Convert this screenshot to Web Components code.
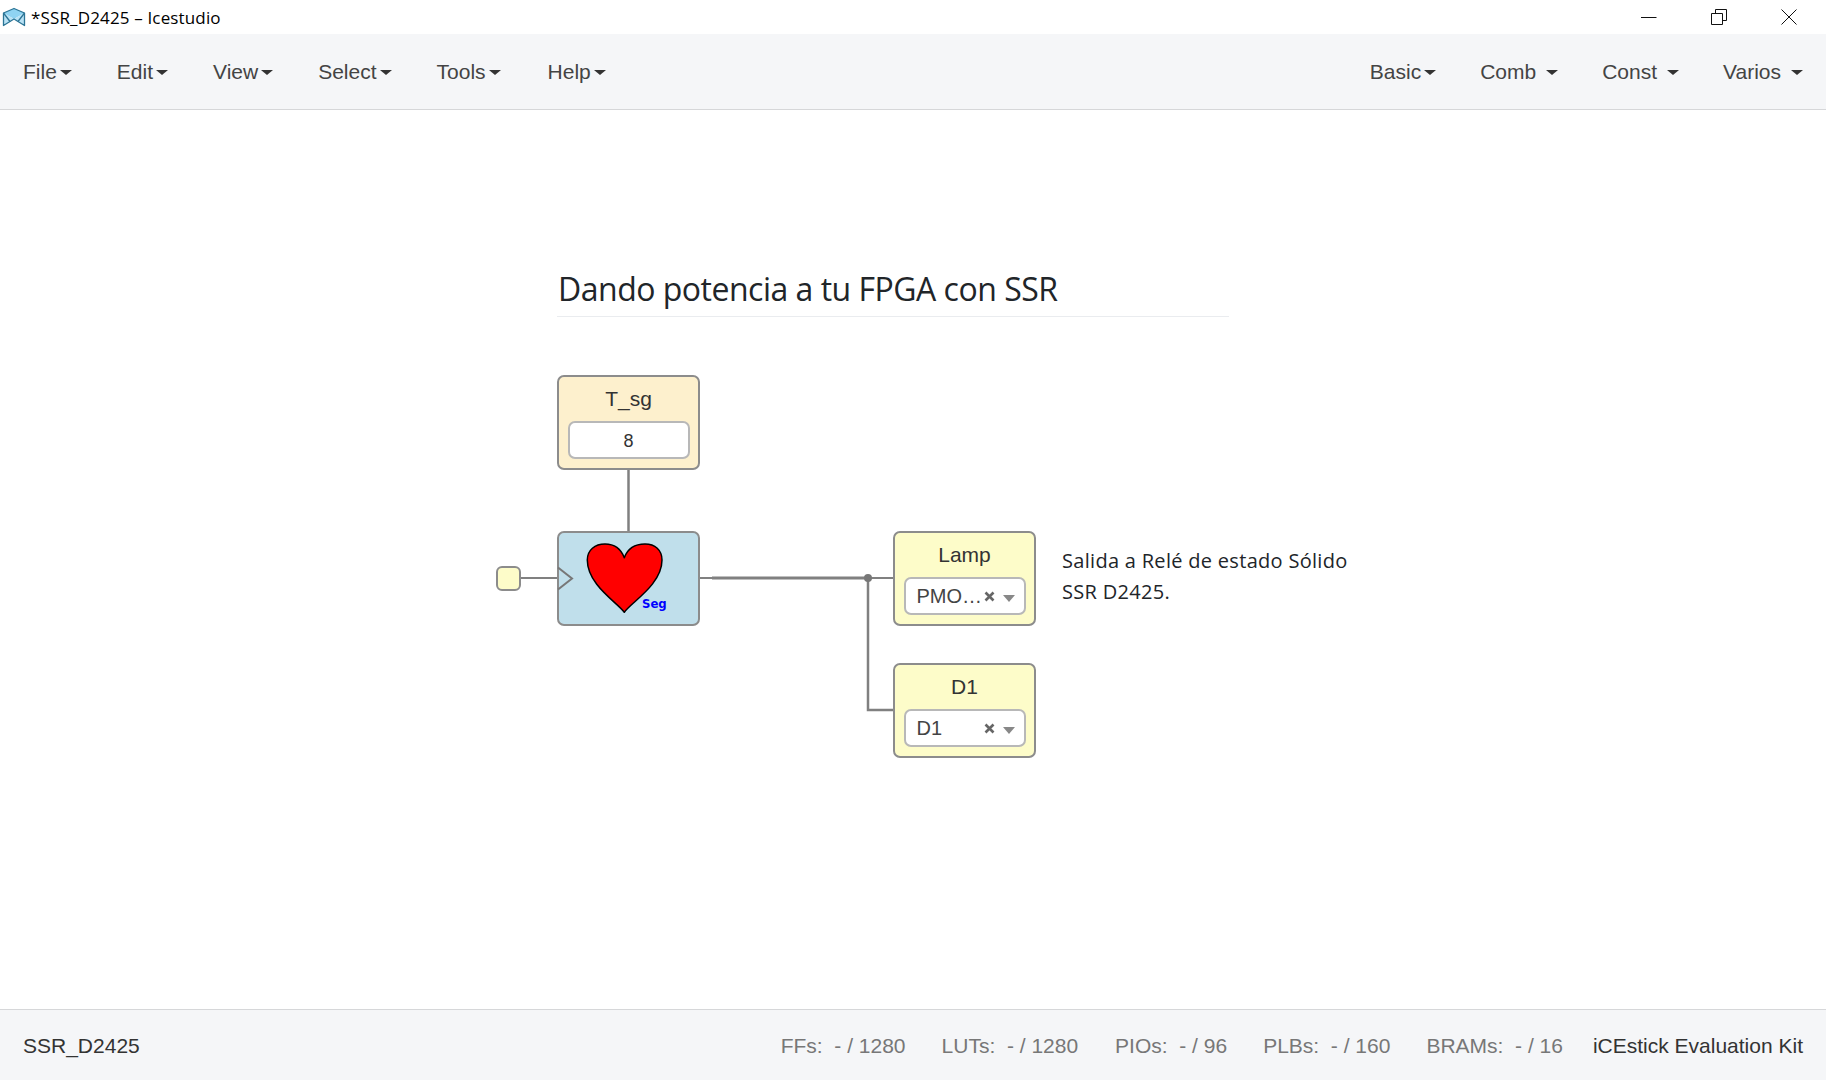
<!DOCTYPE html>
<html>
<head>
<meta charset="utf-8">
<title>Icestudio</title>
<style>
    html, body { margin: 0; height: 100%; background: #fff; }
</style>
</head>
<body>
<ice-app>
    <ice-titlebar slot="top" text="*SSR_D2425 – Icestudio"></ice-titlebar>
    <ice-menubar slot="top">
        <ice-menu label="File"></ice-menu>
        <ice-menu label="Edit"></ice-menu>
        <ice-menu label="View"></ice-menu>
        <ice-menu label="Select"></ice-menu>
        <ice-menu label="Tools"></ice-menu>
        <ice-menu label="Help" style="margin-left:2px"></ice-menu>
        <ice-menu slot="right" label="Basic"></ice-menu>
        <ice-menu slot="right" label="Comb" wide></ice-menu>
        <ice-menu slot="right" label="Const" wide></ice-menu>
        <ice-menu slot="right" label="Varios" wide></ice-menu>
    </ice-menubar>
    <ice-canvas>
        <ice-note kind="heading" x="557" y="160" w="672">Dando potencia a tu FPGA con SSR</ice-note>
        <ice-note kind="text" x="1062" y="435" w="340">Salida a Relé de estado Sólido<br>SSR D2425.</ice-note>

        <ice-block x="557" y="265" color="#fdf0cd" label="T_sg">
            <ice-value>8</ice-value>
        </ice-block>
        <ice-block x="557" y="421" color="#c0dfeb">
            <ice-heart></ice-heart>
        </ice-block>
        <ice-block x="893" y="421" color="#fdfcc9" label="Lamp">
            <ice-select value="PMO…"></ice-select>
        </ice-block>
        <ice-block x="893" y="553" color="#fdfcc9" label="D1">
            <ice-select value="D1"></ice-select>
        </ice-block>
        <ice-port x="496" y="456"></ice-port>
    </ice-canvas>
    <ice-footer slot="bottom" name="SSR_D2425" board="iCEstick Evaluation Kit">
        <ice-stat label="FFs:" value="- / 1280"></ice-stat>
        <ice-stat label="LUTs:" value="- / 1280"></ice-stat>
        <ice-stat label="PIOs:" value="- / 96" style="margin-left:1px"></ice-stat>
        <ice-stat label="PLBs:" value="- / 160"></ice-stat>
        <ice-stat label="BRAMs:" value="- / 16"></ice-stat>
    </ice-footer>
</ice-app>

<script>
function define(name, css, html, setup) {
    customElements.define(name, class extends HTMLElement {
        constructor() {
            super()
            this.attachShadow({ mode: 'open' })
        }
        connectedCallback() {
            const attr = (n) => this.getAttribute(n) || ''
            this.shadowRoot.innerHTML = `<style>${css}</style>` + html(attr, this)
            if (setup) setup(this, attr)
        }
    })
}

const place = (el, attr) => {
    el.style.left = attr('x') + 'px'
    el.style.top = attr('y') + 'px'
}

define('ice-app', `
    :host { display: flex; flex-direction: column; height: 1080px; overflow: hidden;
        font-family: "Liberation Sans", Arial, sans-serif; color: #333; }
`, () => `<slot name="top"></slot><slot></slot><slot name="bottom"></slot>`)

define('ice-titlebar', `
    :host { display: flex; align-items: center; height: 34px; background: #fff; flex: none; }
    .logo { width: 28px; height: 26px; flex: none; align-self: flex-start; margin-top: 4px; }
    .text { margin-left: 3px; font: 17px "Open Sans", sans-serif; color: #000; letter-spacing: .15px; }
    .buttons { margin-left: auto; display: flex; height: 34px; margin-right: 29px; align-items: center; gap: 54px; }
    svg.b { width: 16px; height: 16px; display: block; margin-top: -1px; }
`, (attr) => `
    <svg class="logo" viewBox="0 4 28 26">
        <path d="M3.500 13L14 8.500 24.500 13 14 19Z" fill="#8fd3f2"/>
        <path d="M3.500 13L14 19 10 21.500 3.500 25.500ZM24.500 13L14 19 18 21.500 24.500 25.500Z" fill="#b9e2f5"/>
        <path d="M3.500 13L14 8.500 24.500 13V25.500L18 21.500 14 19 10 21.500 3.500 25.500Z" fill="none" stroke="#2c7596" stroke-width="1.300" stroke-linejoin="round"/>
        <path d="M3.500 13L10 21.500M24.500 13L18 21.500" fill="none" stroke="#2c7596" stroke-width="1.300"/>
    </svg>
    <span class="text">${attr('text')}</span>
    <div class="buttons">
        <svg class="b" viewBox="0 0 16 16"><path d="M0 8.500H15.500" stroke="#111" fill="none"/></svg>
        <svg class="b" viewBox="0 0 16 16"><path d="M.5 4.500H11.500V15.500H.5ZM4.500 4.500V.5H15.500V11.500H11.500" stroke="#111" fill="none"/></svg>
        <svg class="b" viewBox="0 0 16 16"><path d="M.5 .5L15.500 15.500M15.500 .5L.5 15.500" stroke="#111" fill="none"/></svg>
    </div>
`)

define('ice-menubar', `
    :host { display: flex; justify-content: space-between; align-items: center; height: 76px; flex: none; box-sizing: border-box;
        background: #f5f6f8; border-bottom: 1px solid #d6d7d9; }
    .group { display: flex; align-items: center; }
    .l { margin-left: 23px; gap: 45px; }
    .r { margin-right: 23px; gap: 44px; }
`, () => `
    <div class="group l"><slot></slot></div>
    <div class="group r"><slot name="right"></slot></div>
`)

define('ice-menu', `
    :host { display: flex; align-items: center; font-size: 21px; color: #444; }
    i { display: block; margin-left: 3px; margin-top: 2px; border-top: 5.500px solid #333; border-left: 6px solid transparent; border-right: 6px solid transparent; }
    :host([wide]) i { margin-left: 10px; }
`, (attr) => `<span>${attr('label')}</span><i></i>`)

define('ice-canvas', `
    :host { display: block; position: relative; flex: 1; background: #fff; }
    svg { position: absolute; left: 0; top: 0; }
`, () => `
    <svg width="1826" height="899" fill="none" stroke="#808080">
        <path d="M628.500 360V421" stroke-width="2.500"/>
        <path d="M521 468H557" stroke-width="2"/>
        <path d="M700 468H712" stroke-width="2"/>
        <path d="M712 468H868" stroke-width="3"/>
        <path d="M868 468H893" stroke-width="2"/>
        <path d="M868 468V600H893" stroke-width="2.500"/>
        <circle cx="868" cy="468" r="4" fill="#777" stroke="none"/>
    </svg>
    <slot></slot>
`)

define('ice-block', `
    :host { display: flex; flex-direction: column; align-items: center; position: absolute; box-sizing: border-box;
        width: 143px; height: 95px; border: 2px solid #8c8c8c; border-radius: 7px; }
    .label { font-size: 21px; line-height: 23px; margin-top: 10px; color: #333; }
`, (attr) => attr('label') ? `<div class="label">${attr('label')}</div><slot></slot>` : `<slot></slot>`,
(el, attr) => {
    place(el, attr)
    el.style.background = attr('color')
})

define('ice-value', `
    :host { display: flex; align-items: center; justify-content: center; box-sizing: border-box;
        width: 122px; height: 38px; margin-top: 11px; padding-top: 2px; background: #fff; border: 2px solid #b8b8b8; border-radius: 7px;
        font-size: 18px; color: #333; }
`, () => `<slot></slot>`)

define('ice-select', `
    :host { display: flex; align-items: center; box-sizing: border-box; position: relative;
        width: 122px; height: 38px; margin-top: 11px; background: #fff; border: 2px solid #b8b8b8; border-radius: 7px;
        font-size: 20px; color: #444; padding-left: 11px; }
    .x { margin-left: auto; width: 11px; height: 11px; display: block; margin-top: 0; }
    i { display: block; margin: 5px 9px 0 8px; border-top: 7px solid #888; border-left: 6.500px solid transparent; border-right: 6.500px solid transparent; }
`, (attr) => `
    <span>${attr('value')}</span>
    <svg class="x" viewBox="0 0 11 11"><path d="M1.500 1.500L9.500 9.500M9.500 1.500L1.500 9.500" stroke="#666" stroke-width="2.600"/></svg>
    <i></i>
`)

define('ice-heart', `
    :host { display: block; position: absolute; left: 0; top: 0; width: 139px; height: 91px; }
    svg { position: absolute; }
    .seg { position: absolute; left: 83px; top: 63px; color: #00f; font: bold 13px/15px "DejaVu Sans", sans-serif; font-stretch: condensed; }
`, () => `
    <svg style="left:16px;top:2px" width="100" height="85" viewBox="0 0 100 85">
        <path d="M49.300 77.300C43 68 12.300 50 12.300 25 12.300 15 20 9 30 9 39 9 46 14 49.300 22.700 52.500 14 59 9 70 9 80 9 87 15 87 25 87 50 55 68 49.300 77.300Z" fill="#f00" stroke="#000" stroke-width="1.500" stroke-linejoin="round"/>
    </svg>
    <svg style="left:-2px;top:33px" width="18" height="26" viewBox="0 0 18 26" fill="none"><path d="M1 1.500L15 12.500 1 23.500" stroke="#777" stroke-width="2"/></svg>
    <span class="seg">Seg</span>
`)

define('ice-port', `
    :host { display: block; position: absolute; box-sizing: border-box; width: 25px; height: 25px;
        background: #fdfcc9; border: 2px solid #8c8c8c; border-radius: 6px; }
`, () => ``, place)

define('ice-note', `
    :host { display: block; position: absolute; box-sizing: border-box; color: #212529; font-family: "Open Sans", sans-serif; }
    :host([kind="heading"]) { font-size: 32px; font-weight: 500; line-height: 38px; padding: 0 0 8px 1px; border-bottom: 1px solid #eaecef; letter-spacing: -.5px; }
    :host([kind="text"]) { font-size: 20px; font-weight: 500; line-height: 31px; letter-spacing: .3px; }
`, () => `<slot></slot>`, (el, attr) => {
    place(el, attr)
    el.style.width = attr('w') + 'px'
})

define('ice-footer', `
    :host { display: flex; align-items: center; height: 71px; flex: none; box-sizing: border-box;
        background: #f5f6f8; border-top: 1px solid #d6d7d9; font-size: 21px; padding: 2px 23px 0; }
    .stats { display: flex; gap: 36px; margin-left: auto; }
    .board { margin-left: 30px; color: #333; }
`, (attr) => `
    <span>${attr('name')}</span>
    <div class="stats"><slot></slot></div>
    <span class="board">${attr('board')}</span>
`)

define('ice-stat', `
    :host { display: block; color: #777; white-space: pre; }
`, (attr) => `<span>${attr('label')}  ${attr('value')}</span>`)
</script>
</body>
</html>
